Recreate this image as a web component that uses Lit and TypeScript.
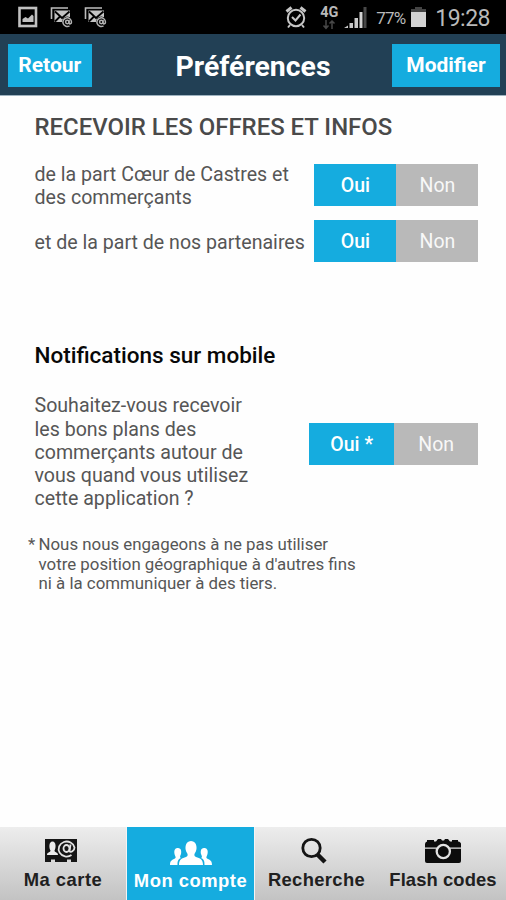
import { LitElement, html, css, svg } from "lit";
import { customElement, property } from "lit/decorators.js";

@customElement("status-bar")
class StatusBar extends LitElement {
  static styles = css`
    :host {
      display: flex;
      box-sizing: border-box;
      height: 34px;
      background: #000;
      color: #b9b9b9;
      font-family: Roboto, "Liberation Sans", sans-serif;
      align-items: flex-start;
      white-space: nowrap;
    }
    svg { display: block; flex: none; }
    .left { display: flex; gap: 11px; padding: 6px 0 0 17px; }
    .right { display: flex; margin-left: auto; padding-right: 16px; }
    .alarm { margin: 5px 10px 0 0; }
    .net { width: 24px; margin: 5px 2px 0 0; text-align: center; }
    .gen { font-size: 14.500px; line-height: 15px; font-weight: 700; }
    .net svg { margin: 0 auto; }
    .signal { margin: 6px 8px 0 0; }
    .pct { font-size: 17px; line-height: 20px; letter-spacing: -0.900px; margin: 8px 5.500px 0 0; }
    .batt { margin: 7px 8.500px 0 0; }
    .time { font-size: 23px; line-height: 24px; letter-spacing: -0.500px; margin-top: 6.500px; }
  `;
  mail() {
    return html`<svg width="23" height="22" viewBox="0 0 23 22" fill="none">
      <path d="M1.500 13V2H18" stroke="#bdbdbd" stroke-width="1.600" />
      <path d="M4.500 4.500H20V11L14 16H4.500Z" fill="#c4c4c4" />
      <path d="M5 5.500L12 12L19.500 5.500M5 15.500L10 10.500" stroke="#000" stroke-width="1.800" />
      <circle cx="17.300" cy="16" r="5.400" fill="#000" />
      <circle cx="17.300" cy="16" r="1.700" stroke="#b2b2b2" stroke-width="1.500" />
      <path d="M19 14V17C19.300 18.500 21.500 18 21.500 16A4.300 4.300 0 1 0 19.500 19.800" stroke="#b2b2b2" stroke-width="1.500" />
    </svg>`;
  }
  render() {
    return html`
      <div class="left">
        <svg width="22" height="22" viewBox="0 0 22 22">
          <rect x="2.500" y="2" width="16.500" height="18" fill="none" stroke="#c1c1c1" stroke-width="2.600" />
          <path d="M5.500 16V13L8.500 11L11 12.500L15 8.500L16.500 10V16Z" fill="#c1c1c1" />
        </svg>
        ${this.mail()}${this.mail()}
      </div>
      <div class="right">
        <svg class="alarm" width="22" height="24" viewBox="0 0 22 24" fill="none" stroke="#c6c6c6">
          <circle cx="11" cy="13" r="8.200" stroke-width="2" />
          <path d="M7 12L10.500 15.500L15.500 9.500" stroke-width="2" />
          <path d="M1.500 6.500L6.500 2.500M20.500 6.500L15.500 2.500" stroke-width="3" />
          <path d="M5 20L3 22.500M17 20L19 22.500" stroke-width="2" />
        </svg>
        <div class="net">
          <div class="gen">4G</div>
          <svg width="14" height="10" viewBox="0 0 14 10" fill="none" stroke="#484848" stroke-width="1.500">
            <path d="M4 0V8M1.500 5.500L4 8.300L6.500 5.500M10 9V1M7.500 3.500L10 1L12.500 3.500" />
          </svg>
        </div>
        <svg class="signal" width="25" height="23" viewBox="0 0 25 23">
          <path d="M1 22L5 19.500V22ZM6.500 17H10V22H6.500ZM11.500 12H15V22H11.500Z" fill="#c9c9c9" />
          <path d="M16.500 6H19.500V22H16.500Z" fill="#d4d4d4" />
          <path d="M20.500 1H23.500V22H20.500Z" fill="#484848" />
        </svg>
        <div class="pct">77%</div>
        <svg class="batt" width="16" height="21" viewBox="0 0 16 21">
          <path d="M4 0H11V2H15V5H0V2H4Z" fill="#444" />
          <path d="M0 5H15V20H0Z" fill="#d2d2d2" />
        </svg>
        <div class="time">19:28</div>
      </div>
    `;
  }
}

@customElement("choice-toggle")
class ChoiceToggle extends LitElement {
  @property() yes = "Oui";
  @property() no = "Non";
  static styles = css`
    :host { display: flex; flex: none; }
    .opt {
      flex: 1;
      display: flex;
      align-items: center;
      justify-content: center;
      box-sizing: border-box;
      height: 42px;
      padding-top: 1px;
      font-size: 19.500px;
      color: #f8f8f8;
      background: #b9b9b9;
      white-space: nowrap;
    }
    .on { background: #15acdf; color: #fff; font-weight: 500; }
  `;
  render() {
    return html`<div class="opt on">${this.yes}</div><div class="opt">${this.no}</div>`;
  }
}

const ICONS: Record<string, unknown> = {
  card: svg`<svg width="34" height="26" viewBox="0 0 34 26">
    <path d="M1 1H33V24H27V21.500H23V24H11V21.500H7V24H1Z" fill="#161616"/>
    <path d="M3 17C3 14 6.500 14.500 6.500 12.500C5 10.500 4.500 3.500 8.500 3.500C12.500 3.500 12 10.500 10.500 12.500C10.500 14.500 14 14 14 17Z" fill="#ededed"/>
    <g fill="none" stroke="#e4e4e4" stroke-width="1.800"><ellipse cx="22.500" cy="10.500" rx="3" ry="3.500"/>
    <path d="M26.500 6.500L25.500 13C26.500 15 30.500 13 30.500 9.500A8 7.500 0 1 0 27.500 17"/></g></svg>`,
  people: svg`<svg width="44" height="26" viewBox="0 0 44 26" fill="#fff">
    <path d="M10 25C10 19 13 18.500 17 17C19 16 19 14.500 18 13C15.500 10 15.500 1 22 1C28.500 1 28.500 10 26 13C25 14.500 25 16 27 17C31 18.500 34 19 34 25Z"/>
    <path d="M1 25C1 20.500 3 20 6 18.500C7.500 17.500 6 16 5.500 14C4.500 9 7 8 9 8C12.500 8 12.500 12 12 14C11 16.500 10.500 17.500 12 18C8.500 19.500 8.500 22 8.500 25Z"/>
    <path d="M43 25C43 20.500 41 20 38 18.500C36.500 17.500 38 16 38.500 14C39.500 9 37 8 35 8C31.500 8 31.500 12 32 14C33 16.500 33.500 17.500 32 18C35.500 19.500 35.500 22 35.500 25Z"/></svg>`,
  search: svg`<svg width="28" height="28" viewBox="0 0 28 28" fill="none" stroke="#141414">
    <circle cx="11.500" cy="11" r="8.700" stroke-width="2.800"/><path d="M17.500 17.500L25 25" stroke-width="4.500"/></svg>`,
  camera: svg`<svg width="38" height="28" viewBox="0 0 38 28">
    <path d="M1 10.500V7Q1 5 3 4.500V3H10V4.500H12L14 2H17L18 3.500H20L21 2H24L26 4.500H28V3H34V4.500Q37 5 37 7V10.500Z" fill="#0c0c0c"/>
    <path d="M1 11.800H37V24Q37 26 35 26H3Q1 26 1 24Z" fill="#0c0c0c"/>
    <circle cx="19.300" cy="14.500" r="6.600" fill="#0c0c0c" stroke="#e2e2e2" stroke-width="2.300"/></svg>`,
};

@customElement("tab-bar")
class TabBar extends LitElement {
  static styles = css`
    :host {
      display: grid;
      grid-template-columns: 127px 127px 126px 126px;
      height: 73px;
      background: linear-gradient(#ededed, #c3c3c3);
    }
    .tab {
      display: flex;
      flex-direction: column;
      align-items: center;
      box-sizing: border-box;
      color: #202020;
    }
    .icon { height: 37.500px; display: flex; align-items: flex-end; }
    .icon svg { display: block; }
    .name {
      font-family: "Liberation Sans", sans-serif;
      font-weight: 700;
      font-size: 18.400px;
      line-height: 22px;
      margin-top: 4.500px;
      letter-spacing: 0.500px;
      white-space: nowrap;
    }
    .card { border-right: 1px solid #f4f4f4; }
    .card .icon { margin-right: 4px; height: 37px; }
    .card .name { margin-top: 5px; }
    .people { background: #15acdf; color: #fff; }
    .people .icon { height: 39px; }
    .people .name { margin-top: 3.500px; }
    .search { border-left: 1px solid #f4f4f4; padding-right: 2px; }
    .search .icon { margin-right: 5px; }
    .search .name { letter-spacing: 0.350px; }
    .camera .name { letter-spacing: 0.100px; }
  `;
  render() {
    const tabs = [
      ["card", "Ma carte"],
      ["people", "Mon compte"],
      ["search", "Recherche"],
      ["camera", "Flash codes"],
    ];
    return tabs.map(
      ([icon, name]) => html`<div class="tab ${icon}">
        <div class="icon">${ICONS[icon]}</div>
        <div class="name">${name}</div>
      </div>`
    );
  }
}

@customElement("app-root")
class AppRoot extends LitElement {
  static styles = css`
    :host {
      display: flex;
      flex-direction: column;
      height: 900px;
      background: #fefefe;
      font-family: Roboto, "Liberation Sans", sans-serif;
      color: #565656;
      overflow: hidden;
    }
    .header {
      display: flex;
      align-items: center;
      justify-content: space-between;
      box-sizing: border-box;
      height: 62px;
      padding: 1px 6px 0 7.500px;
      background: #224055;
      border-bottom: 1px solid #9fb3c0;
      color: #fff;
      font-weight: 700;
    }
    .btn {
      display: flex;
      align-items: center;
      justify-content: center;
      width: 84.500px;
      height: 43px;
      background: #15acdf;
      font-size: 21px;
    }
    .wide { width: 108px; }
    .title { font-size: 28.400px; line-height: 36px; margin: 3px 0 0 22px; }
    .content { flex: 1; padding: 16px 27.600px 0 34.500px; white-space: nowrap; }
    .h1 { font-size: 23.950px; line-height: 30px; font-weight: 500; color: #4a4a4a; }
    .h2 {
      font-size: 22.500px;
      line-height: 28px;
      font-weight: 500;
      color: #080808;
      margin-top: 79px;
    }
    .row { display: flex; justify-content: space-between; align-items: center; }
    .text { font-size: 19.600px; line-height: 23.200px; }
    .first { margin-top: 19px; }
    .first .text { padding-top: 2px; }
    .second { margin-top: 11px; }
    .second .text { padding-top: 2px; }
    .third { margin-top: 25px; align-items: flex-start; }
    .std { width: 164px; }
    .large { width: 169px; margin-top: 29px; }
    .note { display: flex; font-size: 16.850px; line-height: 19.500px; margin: 25px 0 0 -6.500px; }
    .star { width: 10.500px; }
  `;
  render() {
    return html`
      <status-bar></status-bar>
      <div class="header">
        <div class="btn">Retour</div>
        <div class="title">Préférences</div>
        <div class="btn wide">Modifier</div>
      </div>
      <div class="content">
        <div class="h1">RECEVOIR LES OFFRES ET INFOS</div>
        <div class="row first">
          <div class="text">de la part Cœur de Castres et<br />des commerçants</div>
          <choice-toggle class="std"></choice-toggle>
        </div>
        <div class="row second">
          <div class="text">et de la part de nos partenaires</div>
          <choice-toggle class="std"></choice-toggle>
        </div>
        <div class="h2">Notifications sur mobile</div>
        <div class="row third">
          <div class="text">
            Souhaitez-vous recevoir<br />les bons plans des<br />commerçants autour de<br />vous quand vous utilisez<br />cette application ?
          </div>
          <choice-toggle class="large" yes="Oui *"></choice-toggle>
        </div>
        <div class="note">
          <div class="star">*</div>
          <div>Nous nous engageons à ne pas utiliser<br />votre position géographique à d'autres fins<br />ni à la communiquer à des tiers.</div>
        </div>
      </div>
      <tab-bar></tab-bar>
    `;
  }
}
